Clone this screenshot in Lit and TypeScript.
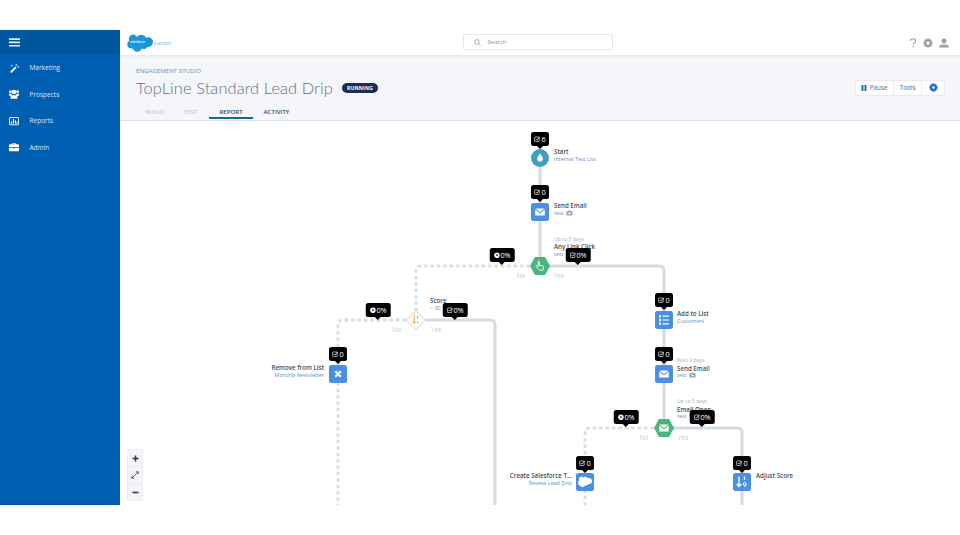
import { LitElement, html, css, svg } from "lit";
import { customElement } from "lit/decorators.js";

const CHECK = svg`<rect x="1" y="1.5" width="7" height="7" rx="1" fill="none" stroke="#fff" stroke-width="1"/><path d="M2.6 4.6 4.4 6.4 9 1.4" fill="none" stroke="#fff" stroke-width="1.2"/>`;
const CROSS = svg`<circle cx="5" cy="5" r="4.4" fill="#fff"/><path d="M3.5 3.5 6.500 6.500M6.500 3.500 3.500 6.500" stroke="#000" stroke-width="1.100"/>`;
const ENVELOPE = svg`<path d="M2 3.200h12L8 8.200Z" fill="#fff"/><path d="M1.600 4.400v7.200c0 .5.300.8.800.8h11.200c.5 0 .8-.3.800-.8V4.400L8 9.800Z" fill="#fff"/>`;

type Tip = { x: number; y: number; kind: "check" | "cross"; text: string };
const TIPS: Tip[] = [
  { x: 540, y: 131, kind: "check", text: "6" },
  { x: 540, y: 184, kind: "check", text: "0" },
  { x: 502, y: 247, kind: "cross", text: "0%" },
  { x: 578, y: 247, kind: "check", text: "0%" },
  { x: 378, y: 302, kind: "cross", text: "0%" },
  { x: 455, y: 302, kind: "check", text: "0%" },
  { x: 338, y: 346, kind: "check", text: "0" },
  { x: 664, y: 292, kind: "check", text: "0" },
  { x: 664, y: 346, kind: "check", text: "0" },
  { x: 626, y: 409, kind: "cross", text: "0%" },
  { x: 702, y: 409, kind: "check", text: "0%" },
  { x: 585, y: 455, kind: "check", text: "0" },
  { x: 742, y: 455, kind: "check", text: "0" },
];

type Label = { x: number; y: number; side: "l" | "r"; pre?: string; title: string; sub?: string; cam?: boolean };
const LABELS: Label[] = [
  { x: 554, y: 147, side: "r", title: "Start", sub: "Internal Test List" },
  { x: 554, y: 201, side: "r", title: "Send Email", sub: "test", cam: true },
  { x: 554, y: 234.5, side: "r", pre: "Up to 5 days", title: "Any Link Click", sub: "test", cam: true },
  { x: 430, y: 296, side: "r", title: "Score", sub: "> 30" },
  { x: 324, y: 363, side: "l", title: "Remove from List", sub: "Monthly Newsletter" },
  { x: 677, y: 309, side: "r", title: "Add to List", sub: "Customers" },
  { x: 677, y: 356, side: "r", pre: "Wait 2 days", title: "Send Email", sub: "test", cam: true },
  { x: 677, y: 397, side: "r", pre: "Up to 3 days", title: "Email Open", sub: "test", cam: true },
  { x: 572, y: 471, side: "l", title: "Create Salesforce T...", sub: "Review Lead Drip" },
  { x: 756, y: 470.5, side: "r", title: "Adjust Score" },
];

const BRANCHES = [
  { x: 521, y: 275, t: "No" }, { x: 559, y: 275, t: "Yes" },
  { x: 397, y: 329, t: "No" }, { x: 436, y: 329, t: "Yes" },
  { x: 644, y: 437, t: "No" }, { x: 683, y: 437, t: "Yes" },
];

const GEAR = "M4 .4h2l.3 1.300 1.200-.6 1.400 1.400-.6 1.200 1.300.3v2l-1.300.3.600 1.200-1.400 1.400-1.200-.6L6 9.600H4l-.3-1.300-1.200.6-1.400-1.400.6-1.200L.4 6V4l1.300-.3-.6-1.200 1.400-1.400 1.200.6Z";

const NAV = [
  { t: "Marketing", i: svg`<path d="M1.500 11.500 8 4.600l1.700 1.600-6.600 7Z" fill="#fff"/><path d="M9.500 1.500v2M8.500 2.500h2M12 4v2M11 5h2M3.500 2.500v2M2.500 3.500h2" stroke="#fff" stroke-width=".9"/>` },
  { t: "Prospects", i: svg`<circle cx="6.500" cy="4" r="2.900" fill="#fff"/><circle cx="1.900" cy="3.600" r="1.900" fill="#fff"/><circle cx="11.100" cy="3.600" r="1.900" fill="#fff"/><path d="M0 6.200h3L4 8h5l1-1.800h3v2.600h-2.200v3.800H2.200V8.800H0Z" fill="#fff"/>` },
  { t: "Reports", i: svg`<rect x=".6" y="2" width="11.800" height="9.400" rx=".8" fill="none" stroke="#fff" stroke-width="1.200"/><path d="M2.400 9.800V7h1.600v2.800ZM5 9.800V4h1.600v5.800ZM7.600 9.800V6h1.600v3.800Z M9.800 9.800V7.600h1.200v2.200Z" fill="#fff"/>` },
  { t: "Admin", i: svg`<path d="M4.200 3V1.600h4.600V3h3.200c.5 0 1 .4 1 1v2.600H0V4c0-.6.5-1 1-1ZM5.300 2.600v.4h2.400v-.4Z" fill="#fff" fill-rule="evenodd"/><path d="M0 7.400h5.400v1h2.200v-1H13V11c0 .6-.5 1-1 1H1c-.5 0-1-.4-1-1Z" fill="#fff"/>` },
];

@customElement("app-root")
export class AppRoot extends LitElement {
  static styles = css`
    :host { display: block; width: 960px; height: 535px; overflow: hidden; background: #fff; font-family: "Open Sans", "Liberation Sans", sans-serif; }
    .app { margin-top: 30px; height: 475px; display: flex; }
    .side { width: 120px; flex: none; background: #005fb2; }
    .side-top { height: 25px; background: #00569f; display: flex; align-items: center; padding-left: 9px; }
    .nav { display: flex; flex-direction: column; margin-top: -.5px; }
    .nav-item { height: 26.5px; display: flex; align-items: center; gap: 10.5px; padding-left: 9px; color: #d6e8f7; font-size: 6.5px; font-weight: 500; }
    .nav-item svg { flex: none; width: 10px; height: 10px; }
    .main { flex: 1; display: flex; flex-direction: column; min-width: 0; }
    .head { height: 25px; flex: none; background: #fff; border-bottom: 1px solid #e8eaee; display: flex; align-items: center; padding: 0 11px 0 7px; box-shadow: 0 1px 2px rgba(0,0,0,.04); position: relative; z-index: 1; }
    .logo { display: flex; align-items: center; gap: 1px; width: 336px; flex: none; }
    .logo-cloud { position: relative; width: 26px; height: 18px; flex: none; }
    .logo-cloud svg { display: block; }
    .logo-cloud span { position: absolute; left: 3px; top: 6px; font-size: 3.1px; color: #fff; font-weight: 600; }
    .pardot { font-size: 5.6px; color: #8fb3da; }
    .search { width: 150px; height: 16px; margin-top: -1px; box-sizing: border-box; border: 1px solid #e4e6ea; border-radius: 1px; display: flex; align-items: center; padding-left: 9.5px; gap: 7px; color: #8a8f96; font-size: 6px; }
    .icons { margin-left: auto; display: flex; align-items: center; gap: 6px; }
    .sub { height: 65px; flex: none; box-sizing: border-box; background: #f4f6f9; border-bottom: 1px solid #dfe3e9; padding: 11px 15px 0 16px; display: flex; flex-direction: column; }
    .eyebrow { font-size: 6.15px; color: #6f93bd; line-height: 8px; }
    .title-row { display: flex; align-items: center; gap: 9px; margin-top: 3px; height: 19px; }
    .title { font-size: 16.4px; color: #667080; line-height: 19px; letter-spacing: .1px; font-weight: 300; font-family: "Lato", "Open Sans", sans-serif; }
    .badge { background: #16325c; color: #fff; font-size: 5px; font-weight: 700; letter-spacing: .25px; border-radius: 6px; padding: 0 5px; height: 10px; line-height: 10px; }
    .actions { margin-left: auto; display: flex; height: 16px; box-sizing: border-box; border: 1px solid #e8ebef; border-radius: 2px; background: #fff; font-size: 6.4px; color: #54698d; }
    .act { display: flex; align-items: center; gap: 3px; padding: 0 5.5px; border-right: 1px solid #e8ebef; }
    .act:first-child { padding-left: 4.5px; }
    .act:last-child { border-right: 0; padding: 0 6.5px; }
    .tabs { display: flex; margin-top: 6px; margin-left: -1.500px; height: 16px; font-size: 6.1px; font-weight: 600; color: #c3c8d0; }
    .tab { display: flex; align-items: center; justify-content: center; box-sizing: border-box; height: 16px; }
    .tab.b { width: 28px; margin-left: 6px; } .tab.t { width: 12px; margin-left: 16px; }
    .tab.r { width: 44px; margin-left: 12.5px; color: #3e4a5e; border-bottom: 2px solid #0f6d94; padding-top: 2px; }
    .tab.a { width: 27px; margin-left: 10px; color: #3e4a5e; }
    .canvas { flex: 1; position: relative; background: #fff; overflow: hidden; }
    .lines { position: absolute; left: 0; top: 0; }
    .shape { position: absolute; width: 20px; height: 20px; margin: -10px 0 0 -10px; }
    .tip { position: absolute; height: 14px; background: #000; border-radius: 2.500px; color: #fff; font-size: 7.300px; display: flex; align-items: center; justify-content: center; gap: .5px; transform: translateX(-50%); box-sizing: border-box; padding: 0 1px; white-space: nowrap; }
    .tip::after { content: ""; position: absolute; left: 50%; bottom: -3px; margin-left: -3px; border: 3px solid transparent; border-bottom: 0; border-top-color: #000; }
    .tip.n { width: 18px; } .tip.p { width: 24.500px; }
    .tip svg { width: 6.500px; height: 6.500px; flex: none; }
    .lab { position: absolute; line-height: 7.500px; font-size: 5.400px; white-space: nowrap; color: #5f8fc4; }
    .lab.l { transform: translateX(-100%); text-align: right; }
    .pre { color: #a9aeb6; font-size: 5.200px; }
    .ttl { color: #434d5e; font-weight: 600; font-size: 6.200px; }
    .cam { display: inline-block; vertical-align: -1px; margin-left: 3px; }
    .branch { position: absolute; font-size: 6.600px; color: #c8ccd3; transform: translateX(-50%); line-height: 8px; }
    .zoom { position: absolute; left: 7px; top: 328px; width: 16px; box-sizing: border-box; background: #f4f5f7; border: 1px solid #eceef1; border-radius: 2px; display: flex; flex-direction: column; }
    .zoom div { height: 16px; display: flex; align-items: center; justify-content: center; border-bottom: 1px solid #e8eaee; }
    .zoom div:last-child { border-bottom: 0; }
  `;

  private tip(t: Tip) {
    const pct = t.text.endsWith("%");
    return html`<div class="tip ${pct ? "p" : "n"}" style="left:${t.x - 120}px;top:${t.y - 120}px">
      <svg viewBox="0 0 10 10">${t.kind === "check" ? CHECK : CROSS}</svg><span>${t.text}</span></div>`;
  }

  private label(l: Label) {
    return html`<div class="lab ${l.side}" style="left:${l.x - 120}px;top:${l.y - 120}px">
      ${l.pre ? html`<div class="pre">${l.pre}</div>` : ""}
      <div class="ttl">${l.title}</div>
      ${l.sub ? html`<div>${l.sub}${l.cam ? html`<svg class="cam" width="7" height="6" viewBox="0 0 7 6"><path d="M.5 1.300h1.400L2.400.5h2.200l.5.8h1.400v4.200H.5Z" fill="#9aa3af"/><circle cx="3.500" cy="3.300" r="1.100" fill="#fff"/></svg>` : ""}</div>` : ""}
    </div>`;
  }

  private square(cx: number, cy: number, inner: unknown) {
    return html`<svg class="shape" style="left:${cx - 120}px;top:${cy - 120}px" viewBox="0 0 20 20">
      <rect x="1" y="1" width="18" height="18" rx="2.500" fill="#4a90e2"/>${inner}</svg>`;
  }

  render() {
    const env = svg`<g transform="translate(4 4.200) scale(.75)">${ENVELOPE}</g>`;
    return html`<div class="app">
      <aside class="side">
        <div class="side-top"><svg width="11" height="9" viewBox="0 0 11 9"><path d="M0 .3h11v1.700H0ZM0 3.600h11v1.700H0ZM0 6.900h11v1.700H0Z" fill="#e6f0f9"/></svg></div>
        <nav class="nav">${NAV.map(n => html`<div class="nav-item"><svg viewBox="0 0 13 13">${n.i}</svg><span>${n.t}</span></div>`)}</nav>
      </aside>
      <div class="main">
        <header class="head">
          <div class="logo">
            <div class="logo-cloud"><svg width="26" height="18" viewBox="0 0 26 18"><path d="M10 3.200C11 1.600 12.600.8 14.300.8c2.200 0 4 1.200 4.800 3 .7-.3 1.400-.5 2.200-.5 2.800 0 4.700 2.200 4.700 4.800s-2 4.800-4.700 4.800h-1c-.7 1.300-2.100 2.100-3.600 2.100-.6 0-1.200-.1-1.700-.4-.8 1.900-2.600 3.100-4.600 3.100-2.200 0-4-1.300-4.800-3.200-.3.100-.7.100-1 .1C2.100 14.600.3 12.700.3 10.400c0-1.500.8-2.900 2-3.600-.3-.6-.4-1.300-.4-2C1.900 2.300 3.900.5 6.300.5c1.500 0 2.800.9 3.700 2.700Z" fill="#1b96dc"/></svg><span>salesforce</span></div>
            <span class="pardot">pardot</span>
          </div>
          <div class="search">
            <svg width="7" height="7" viewBox="0 0 7 7"><circle cx="2.900" cy="2.900" r="2.300" fill="none" stroke="#8a8f96" stroke-width=".7"/><path d="M4.600 4.600 6.800 6.800" stroke="#8a8f96" stroke-width=".7"/></svg>
            <span>Search</span>
          </div>
          <div class="icons">
            <svg width="8" height="10" viewBox="0 0 8 10"><path d="M1.200 3.100C1.200 1.500 2.400.7 3.900.7c1.500 0 2.700.9 2.700 2.300 0 1.900-2.300 1.900-2.300 3.700" fill="none" stroke="#9aa0a8" stroke-width="1.100"/><circle cx="4.200" cy="8.800" r=".8" fill="#9aa0a8"/></svg>
            <svg width="10" height="10" viewBox="0 0 10 10"><path d="${GEAR}" fill="#9aa0a8"/><circle cx="5" cy="5" r="1.500" fill="#fff"/></svg>
            <svg width="10" height="10" viewBox="0 0 10 10"><circle cx="5" cy="3" r="2.400" fill="#9aa0a8"/><path d="M0 9.600c0-2.200 2-3 3.500-3.200h3c1.500.2 3.500 1 3.500 3.200Z" fill="#9aa0a8"/></svg>
          </div>
        </header>
        <section class="sub">
          <div class="eyebrow">ENGAGEMENT STUDIO</div>
          <div class="title-row">
            <div class="title">TopLine Standard Lead Drip</div>
            <div class="badge">RUNNING</div>
            <div class="actions">
              <div class="act"><svg width="6" height="6" viewBox="0 0 6 6"><path d="M.5 0h2v6h-2ZM3.500 0h2v6h-2Z" fill="#1b6fc2"/></svg><span>Pause</span></div>
              <div class="act">Tools</div>
              <div class="act"><svg width="9" height="9" viewBox="0 0 10 10"><path d="${GEAR}" fill="#1b6fc2"/><circle cx="5" cy="5" r="1.500" fill="#fff"/></svg></div>
            </div>
          </div>
          <div class="tabs">
            <div class="tab b">BUILD</div><div class="tab t">TEST</div><div class="tab r">REPORT</div><div class="tab a">ACTIVITY</div>
          </div>
        </section>
        <section class="canvas">
          <svg class="lines" width="840" height="385" viewBox="120 120 840 385" fill="none">
            <g stroke="#d5dae3" stroke-width="3">
              <path d="M540 160V258"/>
              <path d="M549 265H659Q664 265 664 270V420"/>
              <path d="M426 319H490Q495 319 495 324V505"/>
              <path d="M673 427H737Q742 427 742 432V505"/>
            </g>
            <g stroke="#dcdfe6" stroke-width="2.800" stroke-dasharray="3.800 2.600">
              <path d="M530 265H421Q416 265 416 270V310"/>
              <path d="M406 319H343Q338 319 338 324V505"/>
              <path d="M654 427H590Q585 427 585 432V505"/>
            </g>
          </svg>

          <svg class="shape" style="left:420px;top:37px" viewBox="0 0 20 20"><circle cx="10" cy="10" r="9" fill="#3f9fbe"/><path d="M10 5.500c1.300 2 2.800 3.400 2.800 5.200a2.800 2.800 0 0 1-5.600 0c0-1.800 1.500-3.200 2.800-5.200Z" fill="#fff"/></svg>
          ${this.square(540, 211, env)}
          <svg class="shape" style="left:420px;top:145px" viewBox="0 0 20 20"><path d="M5 1h10l5 9-5 9H5L0 10Z" fill="#4bb57f"/><path d="M8 5.500c.6-.6 1.300-.2 1.300.5v3.200l3.500.8c.7.200 1 .7.800 1.400l-.7 2.800H9.500L6.300 10.500c-.4-.6.500-1.300 1-.8l1 1V6Z" fill="none" stroke="#fff" stroke-width=".9"/></svg>
          <svg class="shape" style="left:296px;top:199px" viewBox="0 0 20 20"><path d="M10 .5 19.500 10 10 19.500.5 10Z" fill="#fff" stroke="#e6e3de" stroke-width="1.200" stroke-linejoin="round"/><path d="M8.300 5v8.500M6.500 11.500l1.800 2 1.800-2" fill="none" stroke="#f0a54a" stroke-width="1"/><path d="M11.500 5.500v3M11 12.500h2" stroke="#f0a54a" stroke-width="1.200"/></svg>
          ${this.square(338, 373, svg`<path d="M8 6.500 10 8.500l2-2 1.500 1.500-2 2 2 2-1.500 1.500-2-2-2 2-1.500-1.500 2-2-2-2Z" fill="#fff"/>`)}
          ${this.square(664, 319, svg`<path d="M8.500 5.500H15v1.200H8.500ZM8.500 9.400H15v1.200H8.500ZM8.500 13.300H15v1.200H8.500Z" fill="#fff"/><circle cx="6" cy="6.100" r="1.100" fill="#fff"/><circle cx="6" cy="10" r="1.100" fill="#fff"/><circle cx="6" cy="13.900" r="1.100" fill="#fff"/><path d="M6 6v8" stroke="#fff" stroke-width=".6"/>`)}
          ${this.square(664, 373, env)}
          <svg class="shape" style="left:544px;top:307px" viewBox="0 0 20 20"><path d="M5 1h10l5 9-5 9H5L0 10Z" fill="#4bb57f"/><g transform="translate(4 4.200) scale(.75)">${ENVELOPE}</g></svg>
          ${this.square(585, 481, svg`<path d="M8 5.700c.6-.6 1.300-1 2.200-1 1.100 0 2.100.6 2.600 1.500.4-.2.900-.3 1.300-.3 1.700 0 3 1.400 3 3.100s-1.300 3.100-3 3.100h-.6c-.5.800-1.300 1.300-2.300 1.300-.4 0-.7-.1-1-.2-.5 1.100-1.600 1.900-2.800 1.900-1.300 0-2.500-.8-3-2-.2 0-.4.100-.6.100C4.300 13.200 3 12 3 10.500c0-1 .5-1.800 1.300-2.300-.2-.4-.3-.8-.3-1.200 0-1.500 1.200-2.600 2.600-2.600.5 0 1 .4 1.400 1.300Z" fill="#fff"/>`)}
          ${this.square(742, 481, svg`<path d="M7 4.500v10M4.800 12l2.200 2.500 2.200-2.500" fill="none" stroke="#fff" stroke-width="1.300"/><path d="M12.500 4.500v3.500" stroke="#fff" stroke-width="1.300"/><circle cx="12.700" cy="12" r="1.500" fill="none" stroke="#fff" stroke-width="1"/><path d="M14 12.500c0 1-.4 2-1.600 2.300" fill="none" stroke="#fff" stroke-width="1"/>`)}

          ${LABELS.map(l => this.label(l))}
          ${BRANCHES.map(b => html`<div class="branch" style="left:${b.x - 120}px;top:${b.y - 124}px">${b.t}</div>`)}
          ${TIPS.map(t => this.tip(t))}

          <div class="zoom">
            <div><svg width="7" height="7" viewBox="0 0 7 7"><path d="M2.700.5h1.600v2.200h2.200v1.600H4.300v2.200H2.700V4.300H.5V2.700h2.200Z" fill="#2f3a4c"/></svg></div>
            <div><svg width="8" height="8" viewBox="0 0 8 8"><path d="M.8 7.200 7.200.8M4.800.8h2.400v2.400M.8 4.800v2.400h2.400" fill="none" stroke="#4a5568" stroke-width=".9"/></svg></div>
            <div><svg width="7" height="7" viewBox="0 0 7 7"><path d="M.5 2.700h6v1.600h-6Z" fill="#2f3a4c"/></svg></div>
          </div>
        </section>
      </div>
    </div>`;
  }
}
